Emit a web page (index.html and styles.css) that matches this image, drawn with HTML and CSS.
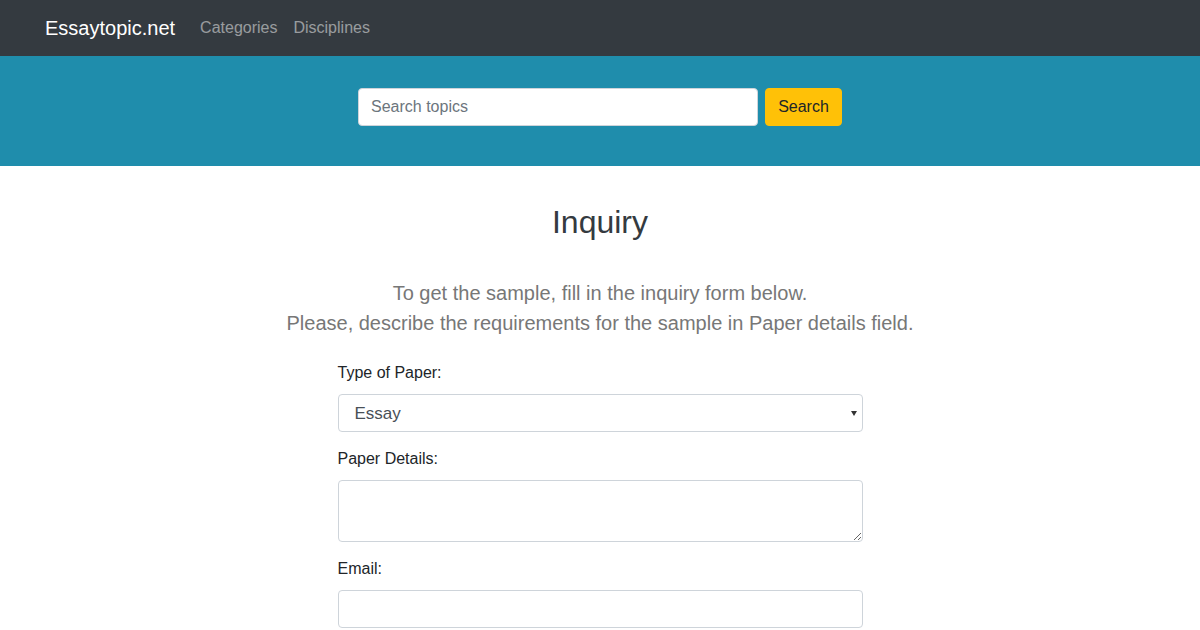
FILE: index.html
```html
<!DOCTYPE html>
<html lang="en">
<head>
<meta charset="utf-8">
<title>Inquiry - Essaytopic.net</title>
<link rel="stylesheet" href="styles.css">
</head>
<body>
<nav class="navbar">
  <div class="container nav-inner">
    <a class="brand" href="#">Essaytopic.net</a>
    <a class="nav-link" href="#">Categories</a>
    <a class="nav-link" href="#">Disciplines</a>
  </div>
</nav>
<section class="hero">
  <form class="search">
    <input class="search-input" type="text" placeholder="Search topics">
    <button class="search-btn" type="button">Search</button>
  </form>
</section>
<main class="content">
  <h1 class="title">Inquiry</h1>
  <p class="lead">To get the sample, fill in the inquiry form below.<br>Please, describe the requirements for the sample in Paper details field.</p>
  <form class="inquiry">
    <div class="group">
      <label class="label">Type of Paper:</label>
      <div class="select-wrap">
        <select class="control select">
          <option>Essay</option>
        </select>
      </div>
    </div>
    <div class="group">
      <label class="label">Paper Details:</label>
      <textarea class="control textarea"></textarea>
    </div>
    <div class="group">
      <label class="label">Email:</label>
      <input class="control" type="email">
    </div>
  </form>
</main>
</body>
</html>
```
FILE: styles.css
```css
* { box-sizing: border-box; }
html, body { margin: 0; padding: 0; }
body {
  font-family: "Liberation Sans", Arial, sans-serif;
  font-size: 16px;
  line-height: 1.5;
  color: #212529;
  background: #fff;
}
.container {
  max-width: 1140px;
  margin: 0 auto;
  padding: 0 15px;
}
.navbar {
  background: #343a40;
  height: 56px;
}
.nav-inner {
  display: flex;
  align-items: center;
  height: 56px;
}
.brand {
  color: #fff;
  font-size: 20px;
  text-decoration: none;
  margin-right: 17px;
  line-height: 30px;
}
.nav-link {
  color: rgba(255,255,255,.5);
  text-decoration: none;
  font-size: 16px;
  padding: 8px 8px;
}
.hero {
  background: #1f8dac;
  padding: 32px 0 40px;
}
.search {
  display: flex;
  justify-content: center;
  gap: 7px;
  margin: 0;
}
.search-input {
  width: 400px;
  height: 38px;
  border: 1px solid #ced4da;
  border-radius: 4px;
  padding: 6px 12px;
  font: inherit;
  font-size: 16px;
  color: #495057;
  background: #fff;
}
.search-input::placeholder { color: #6c757d; }
.search-btn {
  width: 77px;
  height: 38px;
  background: #ffc107;
  border: 1px solid #ffc107;
  border-radius: 4px;
  font: inherit;
  font-size: 16px;
  color: #212529;
  padding: 0;
}
.content {
  padding-top: 37px;
  text-align: center;
}
.title {
  font-size: 32px;
  font-weight: 400;
  line-height: 1.2;
  color: #343a40;
  margin: 0 0 37px;
}
.lead {
  font-size: 20px;
  line-height: 30px;
  color: #777;
  margin: 0 0 23px;
}
.inquiry {
  width: 525px;
  margin: 0 auto;
  text-align: left;
}
.group { margin-bottom: 15px; }
.label {
  display: block;
  line-height: 24px;
  margin-bottom: 9px;
  color: #212529;
}
.control {
  display: block;
  width: 100%;
  height: 38px;
  border: 1px solid #ced4da;
  border-radius: 4px;
  background: #fff;
  font: inherit;
  font-size: 16px;
  color: #495057;
  padding: 6px 12px;
  margin: 0;
}
.select-wrap { position: relative; }
.select-wrap::after {
  content: "";
  position: absolute;
  right: 6px;
  top: 17px;
  border-left: 3px solid transparent;
  border-right: 3px solid transparent;
  border-top: 5px solid #333;
  pointer-events: none;
}
.select {
  appearance: none;
  -webkit-appearance: none;
  padding-left: 16px;
  font-size: 17px;
}
.textarea {
  height: 62px;
  resize: vertical;
}
```
